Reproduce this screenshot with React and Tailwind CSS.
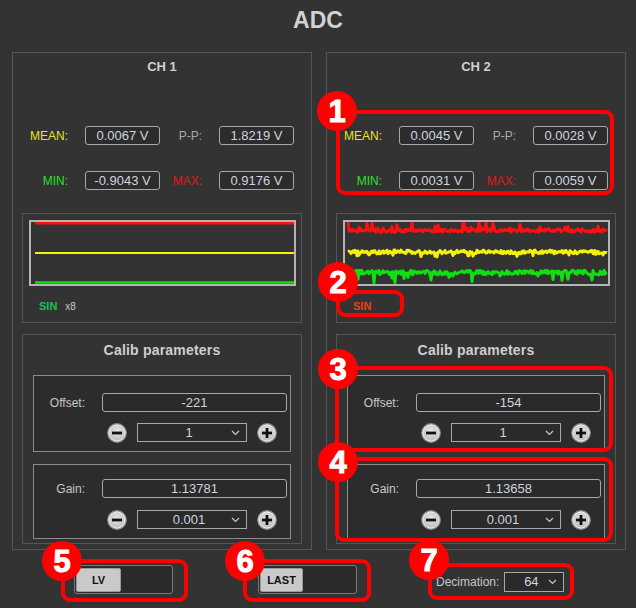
import React from 'react'

function rng(seed) {
  return function () {
    seed |= 0
    seed = (seed + 0x6d2b79f5) | 0
    let t = Math.imul(seed ^ (seed >>> 15), 1 | seed)
    t = (t + Math.imul(t ^ (t >>> 7), 61 | t)) ^ t
    return ((t ^ (t >>> 14)) >>> 0) / 4294967296
  }
}

// jittery trace, one point per pixel, with occasional spikes
function noisePoints(seed, base, amp, spikeP, spikeAmp, dir) {
  const r = rng(seed)
  const pts = []
  for (let x = 3; x <= 262; x += 1) {
    let y = base + (r() - 0.5) * amp
    if (r() < spikeP) y += dir * r() * spikeAmp
    pts.push(`${x},${y.toFixed(1)}`)
  }
  return pts.join(' ')
}

const redPts = noisePoints(7, 8.5, 3.5, 0.18, 7, -1)
const yelPts = noisePoints(21, 30, 4, 0.15, 5, 1)
const grnPts = noisePoints(42, 50.5, 4.5, 0.16, 9, 1)

function Stat({ label, color, value, wide }) {
  return (
    <>
      <div className={`${wide ? 'w-[55px]' : 'w-[42px]'} text-right text-[12px] ${color}`}>{label}</div>
      <div className="ml-[17px] w-[75px] h-[19px] border border-[#a8a8a8] rounded-[3px] bg-[#2c2c2c] flex items-center justify-center text-[13px] text-[#cdd5de]">
        {value}
      </div>
    </>
  )
}

function RoundBtn({ plus }) {
  return (
    <svg width="20" height="20" viewBox="0 0 20 20">
      <defs>
        <radialGradient id={plus ? 'gp' : 'gm'} cx="50%" cy="40%" r="60%">
          <stop offset="0%" stopColor="#e8e8e8" />
          <stop offset="100%" stopColor="#b8b8b8" />
        </radialGradient>
      </defs>
      <circle cx="10" cy="10" r="9.3" fill={`url(#${plus ? 'gp' : 'gm'})`} stroke="#8a8a8a" strokeWidth="1.2" />
      <circle cx="10" cy="10" r="8" fill="none" stroke="#f2f2f2" strokeWidth="0.8" />
      <rect x="5" y="8.6" width="10" height="2.8" fill="#111" />
      {plus && <rect x="8.6" y="5" width="2.8" height="10" fill="#111" />}
    </svg>
  )
}

function Select({ value, w }) {
  return (
    <div className={`${w} h-[19px] border border-[#a8a8a8] bg-[#2a2a2a] relative flex items-center justify-center text-[13px] text-[#cdd5de]`}>
      <span className="-ml-[6px]">{value}</span>
      <svg className="absolute right-[6px] top-[6px]" width="9" height="6" viewBox="0 0 9 6">
        <path d="M1 1 L4.5 4.5 L8 1" fill="none" stroke="#c8c8c8" strokeWidth="1.2" />
      </svg>
    </div>
  )
}

function ParamBox({ label, value, step, pt, gap, h }) {
  return (
    <div className={`ml-[10px] w-[258px] ${h} border border-[#8c8c8c] bg-[#2c2c2c] ${pt}`}>
      <div className="flex items-center h-[19px]">
        <div className="w-[51px] text-right text-[12px] text-[#c8c8c8]">{label}</div>
        <div className="ml-[17px] w-[185px] h-[19px] border border-[#a8a8a8] rounded-[3px] bg-[#2a2a2a] flex items-center justify-center text-[13px] text-[#cdd5de]">
          {value}
        </div>
      </div>
      <div className={`flex items-center h-[19px] ${gap}`}>
        <div className="ml-[73px]"><RoundBtn /></div>
        <div className="ml-[10px]"><Select value={step} w="w-[110px]" /></div>
        <div className="ml-[10px]"><RoundBtn plus /></div>
      </div>
    </div>
  )
}

function Channel({ name, stats, flat, sinColor, showX8, offset, gain }) {
  return (
    <div className="w-[300px] h-[498px] border border-[#555555] flex flex-col">
      <div className="h-[28px] flex items-center justify-center text-[13px] font-bold text-[#cfcfcf]">{name}</div>
      <div className="mt-[45px] flex items-center h-[19px]">
        <Stat wide label="MEAN:" color="text-[#e6e61e]" value={stats[0]} />
        <Stat label="P-P:" color="text-[#a8a8a8]" value={stats[1]} />
      </div>
      <div className="mt-[26px] flex items-center h-[19px]">
        <Stat wide label="MIN:" color="text-[#2ee02e]" value={stats[2]} />
        <Stat label="MAX:" color="text-[#e01818]" value={stats[3]} />
      </div>
      <div className="mt-[23px] ml-[9px] w-[280px] h-[110px] border border-[#555555]">
        <div className="mt-[6px] ml-[6px] w-[267px] h-[66px] border-2 border-[#b4b4b4]">
          <svg width="263" height="62" viewBox="0 0 263 62" className="block">
            {flat ? (
              <>
                <line x1="4" y1="1.3" x2="263" y2="1.3" stroke="#ff1010" strokeWidth="2.4" />
                <line x1="4" y1="31" x2="263" y2="31" stroke="#f2f20a" strokeWidth="2" />
                <line x1="4" y1="60.5" x2="263" y2="60.5" stroke="#10e010" strokeWidth="2.4" />
              </>
            ) : (
              <>
                <polyline points={redPts} fill="none" stroke="#ff1010" strokeWidth="3" strokeLinejoin="round" />
                <polyline points={yelPts} fill="none" stroke="#f2f20a" strokeWidth="3" strokeLinejoin="round" />
                <polyline points={grnPts} fill="none" stroke="#10e010" strokeWidth="3" strokeLinejoin="round" />
              </>
            )}
          </svg>
        </div>
        <div className="mt-[14px] ml-[16px] flex items-center h-[13px] text-[11px]">
          <span className={`font-bold ${sinColor}`}>SIN</span>
          {showX8 && <span className="ml-[8px] text-[#c8c8c8] text-[10px]">x8</span>}
        </div>
      </div>
      <div className="mt-[11px] ml-[9px] w-[280px] h-[210px] border border-[#555555]">
        <div className="mt-[7px] h-[16px] flex items-center justify-center text-[14px] font-bold text-[#cfcfcf] tracking-[0.2px]">
          Calib parameters
        </div>
        <div className="mt-[17px]">
          <ParamBox label="Offset:" value={offset} step="1" pt="pt-[17px]" gap="mt-[11px]" h="h-[77px]" />
        </div>
        <div className="mt-[12px]">
          <ParamBox label="Gain:" value={gain} step="0.001" pt="pt-[14px]" gap="mt-[12px]" h="h-[75px]" />
        </div>
      </div>
    </div>
  )
}

function Toggle({ label, btnW }) {
  return (
    <div className="w-[99px] h-[29px] border border-[#7a7a7a] rounded-[3px] bg-[#2a2a2a] pt-[2px] pl-[1px]">
      <div className={`${btnW} h-[24px] bg-[#c9c9c9] border border-[#9a9a9a] rounded-[2px] flex items-center justify-center text-[11px] font-bold text-[#111]`}>
        {label}
      </div>
    </div>
  )
}

function Badge({ n, x, y }) {
  return (
    <div
      className="absolute w-[40px] h-[40px] rounded-full bg-[#ff0000] flex items-center justify-center text-white font-bold text-[31px] leading-none [-webkit-text-stroke:1px_white]"
      style={{ left: x - 20, top: y - 20 }}
    >
      <span className="mt-[1px]">{n}</span>
    </div>
  )
}

function Mark({ x1, y1, x2, y2 }) {
  return (
    <div
      className="absolute border-4 border-[#ff0000] rounded-[9px]"
      style={{ left: x1, top: y1, width: x2 - x1, height: y2 - y1 }}
    />
  )
}

export default function App() {
  return (
    <div className="relative w-[636px] h-[608px] bg-[#333333] overflow-hidden font-['Liberation_Sans',Arial,sans-serif]">
      <div className="h-[40px] flex items-center justify-center text-[23px] font-bold text-[#d2d2d2]">ADC</div>
      <div className="mt-[12px] ml-[12px] flex gap-[14px]">
        <Channel
          name="CH 1"
          stats={['0.0067 V', '1.8219 V', '-0.9043 V', '0.9176 V']}
          flat
          sinColor="text-[#1fc04a]"
          showX8
          offset="-221"
          gain="1.13781"
        />
        <Channel
          name="CH 2"
          stats={['0.0045 V', '0.0028 V', '0.0031 V', '0.0059 V']}
          sinColor="text-[#e8401a]"
          offset="-154"
          gain="1.13658"
        />
      </div>
      <div className="flex items-center mt-[15px]">
        <div className="ml-[74px]"><Toggle label="LV" btnW="w-[45px]" /></div>
        <div className="ml-[85px]"><Toggle label="LAST" btnW="w-[43px]" /></div>
        <div className="ml-[79px] text-[12px] text-[#c8c8c8] mt-[4px]">Decimation:</div>
        <div className="ml-[5px] mt-[4px]"><Select value="64" w="w-[60px] h-[20px]" /></div>
      </div>

      <Mark x1={336} y1={110} x2={614} y2={195} />
      <Mark x1={336} y1={290} x2={404} y2={317} />
      <Mark x1={335} y1={366} x2={613} y2={452} />
      <Mark x1={335} y1={457} x2={613} y2={542} />
      <Mark x1={61} y1={559} x2={188} y2={602} />
      <Mark x1={243} y1={559} x2={371} y2={602} />
      <Mark x1={428} y1={563} x2={574} y2={600} />

      <Badge n="1" x={337} y={111} />
      <Badge n="2" x={338} y={282} />
      <Badge n="3" x={338} y={369} />
      <Badge n="4" x={338} y={462} />
      <Badge n="5" x={62} y={561} />
      <Badge n="6" x={245} y={561} />
      <Badge n="7" x={429} y={560} />
    </div>
  )
}
